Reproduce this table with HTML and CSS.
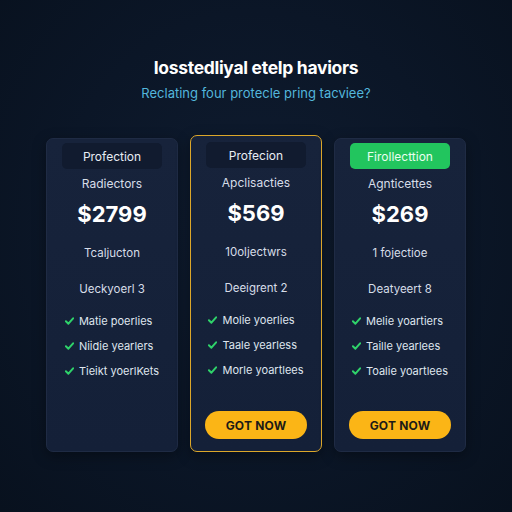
FILE: index.html
```html
<!DOCTYPE html>
<html>
<head>
<meta charset="utf-8">
<link rel="stylesheet" href="styles.css">
</head>
<body>
<main class="page">
  <header class="head">
    <h1 class="title">Iosstedliyal etelp haviors</h1>
    <p class="subtitle">Reclating four protecle pring tacviee?</p>
  </header>
  <section class="cards">
    <article class="card">
      <div class="pill">Profection</div>
      <div class="name">Radiectors</div>
      <div class="price">$2799</div>
      <div class="desc">Tcaljucton</div>
      <div class="line">Ueckyoerl 3</div>
      <ul class="feats">
        <li><svg class="chk" viewBox="0 0 10 8"><path d="M1 4.2 3.8 7 9 1"/></svg>Matie poerlies</li>
        <li><svg class="chk" viewBox="0 0 10 8"><path d="M1 4.2 3.8 7 9 1"/></svg>Niidie yearlers</li>
        <li><svg class="chk" viewBox="0 0 10 8"><path d="M1 4.2 3.8 7 9 1"/></svg>Tieikt yoerlKets</li>
      </ul>
    </article>
    <article class="card featured">
      <div class="pill">Profecion</div>
      <div class="name">Apclisacties</div>
      <div class="price">$569</div>
      <div class="desc">10oljectwrs</div>
      <div class="line">Deeigrent 2</div>
      <ul class="feats">
        <li><svg class="chk" viewBox="0 0 10 8"><path d="M1 4.2 3.8 7 9 1"/></svg>Molie yoerlies</li>
        <li><svg class="chk" viewBox="0 0 10 8"><path d="M1 4.2 3.8 7 9 1"/></svg>Taale yearless</li>
        <li><svg class="chk" viewBox="0 0 10 8"><path d="M1 4.2 3.8 7 9 1"/></svg>Morle yoartlees</li>
      </ul>
      <button class="btn">GOT NOW</button>
    </article>
    <article class="card">
      <div class="pill green">Firollecttion</div>
      <div class="name">Agnticettes</div>
      <div class="price">$269</div>
      <div class="desc">1 fojectioe</div>
      <div class="line">Deatyeert 8</div>
      <ul class="feats">
        <li><svg class="chk" viewBox="0 0 10 8"><path d="M1 4.2 3.8 7 9 1"/></svg>Melie yoartiers</li>
        <li><svg class="chk" viewBox="0 0 10 8"><path d="M1 4.2 3.8 7 9 1"/></svg>Taille yearlees</li>
        <li><svg class="chk" viewBox="0 0 10 8"><path d="M1 4.2 3.8 7 9 1"/></svg>Toalie yoartlees</li>
      </ul>
      <button class="btn">GOT NOW</button>
    </article>
  </section>
</main>
</body>
</html>
```

FILE: styles.css
```css
* { box-sizing: border-box; }
html, body { margin: 0; padding: 0; }
body {
  width: 512px;
  height: 512px;
  overflow: hidden;
  background: radial-gradient(ellipse at 50% 45%, #0f1c30 0%, #0b1627 55%, #08111e 100%);
  font-family: Inter, "Open Sans", sans-serif;
  color: #e6ebf2;
}
.page {
  display: flex;
  flex-direction: column;
  align-items: center;
  padding-top: 57px;
}
.head { text-align: center; }
.title {
  margin: 0;
  font-size: 17.5px;
  font-weight: 700;
  letter-spacing: -0.3px;
  color: #ffffff;
  line-height: 22px;
}
.subtitle {
  margin: 5px 0 0;
  font-size: 13px;
  color: #53b6dc;
  line-height: 18px;
}
.cards {
  display: flex;
  align-items: flex-end;
  gap: 12px;
  margin-top: 33px;
  margin-left: 0;
}
.card {
  width: 132px;
  height: 314px;
  border-radius: 7px;
  background: linear-gradient(180deg, #17233b 0%, #142038 100%);
  border: 1px solid #1f2b44;
  display: flex;
  flex-direction: column;
  align-items: center;
  padding: 4px 15px 0;
  box-shadow: 0 4px 14px rgba(0,0,0,0.35);
}
.card.featured {
  height: 317px;
  border: 1.5px solid #dca72a;
  padding-top: 6px;
}
.pill {
  width: 100%;
  height: 26px;
  border-radius: 5px;
  background: #111b2f;
  display: flex;
  align-items: center;
  justify-content: center;
  font-size: 12px;
  color: #e8edf4;
}
.pill.green {
  background: #22c55e;
  color: #e9fff0;
}
.name {
  margin-top: 7px;
  font-size: 12px;
  line-height: 16px;
  color: #d6dde8;
}
.price {
  margin-top: 9px;
  font-size: 22px;
  font-weight: 700;
  line-height: 26px;
  color: #ffffff;
}
.desc {
  margin-top: 19px;
  font-size: 11.5px;
  line-height: 14px;
  color: #d6dde8;
}
.line {
  margin-top: 22px;
  font-size: 11.5px;
  line-height: 14px;
  color: #d6dde8;
}
.feats {
  list-style: none;
  margin: 18px 0 0;
  padding: 0;
  display: flex;
  flex-direction: column;
  gap: 11px;
}
.feats li {
  display: flex;
  align-items: center;
  gap: 5px;
  font-size: 11px;
  line-height: 14px;
  color: #dfe5ee;
  white-space: nowrap;
}
.chk {
  width: 9px;
  height: 8px;
  fill: none;
  stroke: #2fd36a;
  stroke-width: 2.2;
  stroke-linecap: round;
  stroke-linejoin: round;
}
.btn {
  margin-top: auto;
  margin-bottom: 12px;
  width: 102px;
  height: 28px;
  border: 0;
  border-radius: 14px;
  background: #fbb516;
  color: #1b1a17;
  font-family: Inter, "Open Sans", sans-serif;
  font-weight: 700;
  font-size: 12px;
  letter-spacing: 0.2px;
}
```
